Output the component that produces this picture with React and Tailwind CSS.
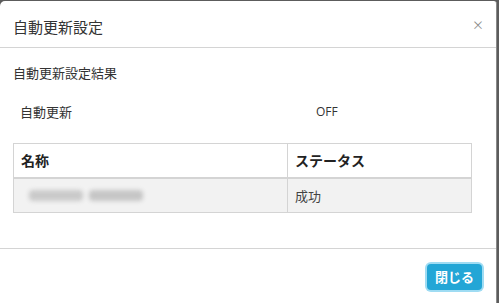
const jp = { fontFamily: '"Noto Sans CJK JP", "Noto Sans", sans-serif' };

export default function App() {
  return (
    <div className="w-[499px] h-[303px] overflow-hidden bg-[#5c5c5c] pt-px pr-[2px]" style={jp}>
      <div className="h-[320px] bg-white rounded-tl-[5px] rounded-tr-[3px] border-r border-[#8a8a8a] text-[#333]">
        {/* header */}
        <div className="h-[47px] border-b border-[#d4d4d4] flex items-center justify-between pl-[13px] pr-[12px]">
          <h4 className="text-[15px] pt-[6px]">自動更新設定</h4>
          <button className="text-[12px] text-[#8c8c8c] pt-[2px] leading-none">×</button>
        </div>

        {/* body */}
        <div className="h-[200px] px-[13px] pt-[16px]">
          <div className="text-[13px] leading-[18px]">自動更新設定結果</div>
          <div className="flex text-[13px] leading-[18px] mt-[21px] pl-[7px]">
            <span className="w-[296px]">自動更新</span>
            <span style={{ fontFamily: '"Open Sans", sans-serif' }} className="text-[12px]">OFF</span>
          </div>
          <table className="mt-[22px] w-[459px] border-collapse text-[13px]">
            <thead>
              <tr className="h-[34px]">
                <th className="w-[274px] border border-[#d4d4d4] border-b-2 text-left font-bold px-[7px] text-[14px] text-[#222]">名称</th>
                <th className="border border-[#d4d4d4] border-b-2 text-left font-bold px-[7px] text-[14px] text-[#222]">ステータス</th>
              </tr>
            </thead>
            <tbody>
              <tr className="h-[35px] bg-[#f2f2f2]">
                <td className="border border-[#d4d4d4] px-[7px]">
                  <div className="ml-[8px] flex gap-[6px]">
                    <div className="w-[54px] h-[11px] rounded-[4px] bg-[#cacaca] blur-[2px]" />
                    <div className="w-[54px] h-[11px] rounded-[4px] bg-[#c6c6c6] blur-[2px]" />
                  </div>
                </td>
                <td className="border border-[#d4d4d4] px-[7px] text-[#444]">成功</td>
              </tr>
            </tbody>
          </table>
        </div>

        {/* footer */}
        <div className="border-t border-[#d4d4d4] flex justify-end pr-[14px] pt-[15px]">
          <button className="h-[26px] px-[8px] rounded-[4px] bg-[#23a6d6] text-white text-[13px] font-semibold ring-2 ring-[#9fdcf3]">
            閉じる
          </button>
        </div>
      </div>
    </div>
  );
}
